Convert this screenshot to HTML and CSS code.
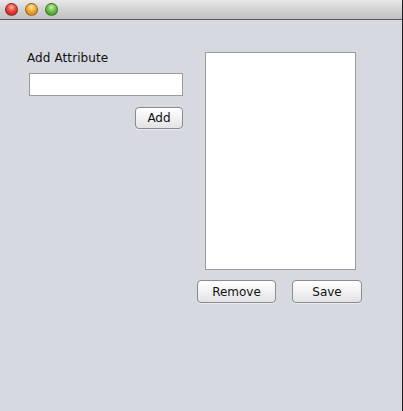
FILE: index.html
```html
<!DOCTYPE html>
<html>
<head>
<meta charset="utf-8">
<link rel="stylesheet" href="styles.css">
</head>
<body>
<div class="window">
  <div class="titlebar">
    <span class="light red"></span>
    <span class="light yellow"></span>
    <span class="light green"></span>
  </div>
  <div class="content">
    <div class="left">
      <div class="label">Add Attribute</div>
      <div class="field"></div>
      <div class="add-row"><button class="btn btn-add">Add</button></div>
    </div>
    <div class="right">
      <div class="list"></div>
      <div class="btn-row">
        <button class="btn btn-remove">Remove</button>
        <button class="btn btn-save">Save</button>
      </div>
    </div>
  </div>
</div>
</body>
</html>
```
FILE: styles.css
```css
html, body {
  margin: 0;
  padding: 0;
  background: #d6d9e0;
  overflow: hidden;
}
.window {
  width: 402px;
  height: 411px;
  border-right: 1px solid #1e1e22;
  background: #d6d9e0;
  font-family: "DejaVu Sans", "Liberation Sans", sans-serif;
  font-size: 12px;
  color: #111;
}
.titlebar {
  height: 19px;
  border-bottom: 1px solid #5c5c5c;
  background: linear-gradient(#e9e9e9, #d2d2d2 50%, #c2c2c2);
  display: flex;
  align-items: center;
  gap: 7px;
  padding-left: 5px;
  box-sizing: content-box;
}
.light {
  width: 13px;
  height: 13px;
  border-radius: 50%;
  box-sizing: border-box;
  border: 1px solid rgba(0,0,0,0.35);
}
.red { background: radial-gradient(circle at 50% 30%, #ffb0a8 0, #e8453c 45%, #b01c14 100%); }
.yellow { background: radial-gradient(circle at 50% 30%, #ffe6a8 0, #f0a830 45%, #c07810 100%); }
.green { background: radial-gradient(circle at 50% 30%, #c8f0b0 0, #6cc048 45%, #3a8a20 100%); }
.content {
  display: flex;
  padding: 32px 0 0 27px;
  gap: 14px;
}
.left {
  width: 156px;
  display: flex;
  flex-direction: column;
}
.label {
  height: 14px;
  line-height: 14px;
  margin-top: -1px;
  letter-spacing: 0.1px;
}
.field {
  margin: 8px 0 0 2px;
  height: 23px;
  box-sizing: border-box;
  border: 1px solid #9a9a9e;
  background: #fff;
}
.add-row {
  display: flex;
  justify-content: flex-end;
  margin-top: 11px;
}
.btn {
  font-family: "DejaVu Sans", "Liberation Sans", sans-serif;
  font-size: 12px;
  color: #111;
  border: 1px solid #8a8a8e;
  border-radius: 4px;
  background: linear-gradient(#ffffff, #f2f2f2 50%, #e2e2e4);
  box-shadow: 0 1px 0 rgba(255,255,255,0.5);
  padding: 0;
  height: 22px;
  line-height: 20px;
}
.btn-add { width: 48px; }
.right {
  width: 165px;
  display: flex;
  flex-direction: column;
}
.list {
  margin-left: 8px;
  width: 151px;
  height: 218px;
  box-sizing: border-box;
  border: 1px solid #9a9a9e;
  background: #fff;
}
.btn-row {
  display: flex;
  gap: 16px;
  margin-top: 10px;
}
.btn-remove { width: 79px; height: 23px; }
.btn-save { width: 70px; height: 23px; }
```
